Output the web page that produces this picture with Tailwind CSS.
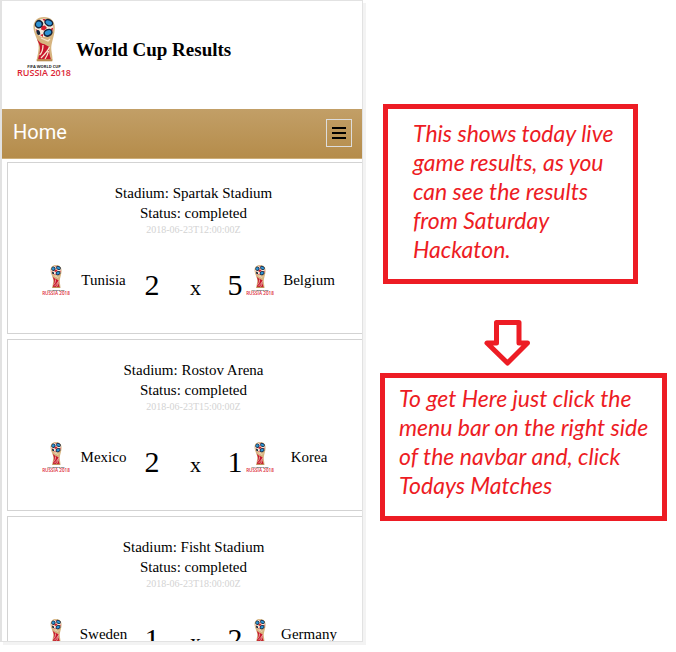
<!DOCTYPE html>
<html lang="en">
<head>
<meta charset="utf-8">
<meta name="viewport" content="width=device-width, initial-scale=1">
<title>World Cup Results</title>
<script src="https://cdn.jsdelivr.net/npm/@tailwindcss/browser@4"></script>
</head>
<body class="flex min-h-screen bg-white text-black font-['Liberation_Serif',serif]">

<svg class="hidden" aria-hidden="true">
  <symbol id="cup" viewBox="0 0 54 60">
    <path d="M27 0C20 0 16 4.500 16.500 11C17 17 20 21 21.500 27C22.300 33 20.500 38 19.500 43.500H35.500C35.800 38 33.500 33 34.500 28C35.500 22 37.800 17 37.800 10.500C37.800 4 33.500 0 27 0Z" fill="#d6b47f"/>
    <path d="M20 22C22 25 25 27 27 27L32.500 30C31.500 34 32.500 38 34 42.500H21C22 38 23.500 34 23 30C22.500 27 21 25 20 22Z" fill="#c8152d"/>
    <path d="M24 21L31 24L33 22M24 41C28 37 31 34 32.500 30M22.500 38C25 36 26 32 26 28M28 42C30 39 31 37 31.500 34" fill="none" stroke="#f8e6d0" stroke-width="1.300"/>
    <circle cx="27.200" cy="10.800" r="9.300" fill="#f6ead9"/>
    <path d="M24.500 9L28 8.500L30 11L27 13.500L24 12.500ZM25.500 2L28.500 2L27.300 4.500ZM18.500 12L20.500 13L20.500 16ZM33.500 12L36.300 10.500L35.300 14.500ZM23 18L26 17L26 20Z" fill="#d3202f"/>
    <g fill="#14233a">
      <ellipse cx="22" cy="7.200" rx="4" ry="4.200" transform="rotate(35 22 7.200)"/>
      <ellipse cx="31.800" cy="5.700" rx="4.700" ry="3.600" transform="rotate(25 31.800 5.700)"/>
      <ellipse cx="31" cy="15.800" rx="4.800" ry="3.900" transform="rotate(-25 31 15.800)"/>
      <ellipse cx="21.300" cy="15.500" rx="1.800" ry="2.600" transform="rotate(-20 21.300 15.500)"/>
    </g>
    <g fill="#2e93d4">
      <ellipse cx="21.800" cy="7.200" rx="2.700" ry="2.700"/>
      <ellipse cx="31.800" cy="5.700" rx="3.300" ry="2.200" transform="rotate(25 31.800 5.700)"/>
      <ellipse cx="31" cy="15.700" rx="3.300" ry="2.300" transform="rotate(-25 31 15.700)"/>
    </g>
    <path d="M19.800 42.300H35.300V44.300H19.800Z" fill="#b98d50"/>
    <text x="27" y="51" text-anchor="middle" font-family="Open Sans, sans-serif" font-size="4" font-weight="700" fill="#222">FIFA WORLD CUP</text>
    <text x="27" y="59" text-anchor="middle" font-family="Open Sans, sans-serif" font-size="9" font-weight="600" fill="#dc1f35">RUSSIA 2018</text>
  </symbol>
</svg>

<main class="mb-[10px] h-[calc(100vh-10px)] min-w-0 flex-1 overflow-hidden border border-l-2 border-[#e2e2e2] shadow-[3px_3px_0_#f3f3f3]">
  <header class="flex h-[108px] items-start pl-[15px] pt-4">
    <svg class="h-[60px] w-[54px]" role="img" aria-label="FIFA World Cup Russia 2018"><use href="#cup"/></svg>
    <h1 class="ml-[5px] mt-[21px] text-[19px] font-bold leading-6">World Cup Results</h1>
  </header>

  <nav class="flex h-[50px] items-center justify-between border-b border-[#cdae78] bg-linear-to-b from-[#c29f67] to-[#b58c4a] pl-[11px] pr-[10px] pb-[4px]">
    <a href="#" class="font-['Roboto',sans-serif] text-[20px] leading-6 text-white">Home</a>
    <button type="button" aria-label="Menu" class="mt-[3px] flex h-[28px] w-[26px] flex-col items-center justify-center gap-[3px] border border-[#ddd]">
      <span class="h-[2px] w-[14px] bg-black"></span>
      <span class="h-[2px] w-[14px] bg-black"></span>
      <span class="h-[2px] w-[14px] bg-black"></span>
    </button>
  </nav>

  <div class="-mr-[18px] ml-[5px] mt-[3px] flex flex-col gap-[5px]">
    <article class="h-[172px] border border-[#d3d3d3] pt-5 text-center">
      <p class="text-[15px] leading-5">Stadium: Spartak Stadium</p>
      <p class="text-[15px] leading-5">Status: completed</p>
      <p class="text-[10px] leading-[14px] text-[#d3d3d3]">2018-06-23T12:00:00Z</p>
      <div class="mt-[28px] grid grid-cols-[28px_67px_30px_57px_22px_28px_70px] items-start pl-[34px]">
        <svg class="h-[31px] w-[28px]" aria-hidden="true"><use href="#cup"/></svg>
        <span class="mt-[5px] text-[15px] leading-5">Tunisia</span>
        <span class="mt-[4px] text-[30px] leading-8">2</span>
        <span class="mt-[7px] text-[22px] leading-8">x</span>
        <span class="mt-[4px] text-[30px] leading-8">5</span>
        <svg class="h-[31px] w-[28px]" aria-hidden="true"><use href="#cup"/></svg>
        <span class="mt-[5px] text-[15px] leading-5">Belgium</span>
      </div>
    </article>
    <article class="h-[172px] border border-[#d3d3d3] pt-5 text-center">
      <p class="text-[15px] leading-5">Stadium: Rostov Arena</p>
      <p class="text-[15px] leading-5">Status: completed</p>
      <p class="text-[10px] leading-[14px] text-[#d3d3d3]">2018-06-23T15:00:00Z</p>
      <div class="mt-[28px] grid grid-cols-[28px_67px_30px_57px_22px_28px_70px] items-start pl-[34px]">
        <svg class="h-[31px] w-[28px]" aria-hidden="true"><use href="#cup"/></svg>
        <span class="mt-[5px] text-[15px] leading-5">Mexico</span>
        <span class="mt-[4px] text-[30px] leading-8">2</span>
        <span class="mt-[7px] text-[22px] leading-8">x</span>
        <span class="mt-[4px] text-[30px] leading-8">1</span>
        <svg class="h-[31px] w-[28px]" aria-hidden="true"><use href="#cup"/></svg>
        <span class="mt-[5px] text-[15px] leading-5">Korea</span>
      </div>
    </article>
    <article class="h-[172px] border border-[#d3d3d3] pt-5 text-center">
      <p class="text-[15px] leading-5">Stadium: Fisht Stadium</p>
      <p class="text-[15px] leading-5">Status: completed</p>
      <p class="text-[10px] leading-[14px] text-[#d3d3d3]">2018-06-23T18:00:00Z</p>
      <div class="mt-[28px] grid grid-cols-[28px_67px_30px_57px_22px_28px_70px] items-start pl-[34px]">
        <svg class="h-[31px] w-[28px]" aria-hidden="true"><use href="#cup"/></svg>
        <span class="mt-[5px] text-[15px] leading-5">Sweden</span>
        <span class="mt-[4px] text-[30px] leading-8">1</span>
        <span class="mt-[7px] text-[22px] leading-8">x</span>
        <span class="mt-[4px] text-[30px] leading-8">2</span>
        <svg class="h-[31px] w-[28px]" aria-hidden="true"><use href="#cup"/></svg>
        <span class="mt-[5px] text-[15px] leading-5">Germany</span>
      </div>
    </article>
  </div>
</main>

<aside class="ml-[17px] mr-[9px] flex w-[287px] shrink-0 flex-col pt-[104px] font-['Lato',sans-serif] text-[23px] italic leading-[29px] text-[#ed1c24]">
  <p class="ml-[3px] mr-[29px] h-[180px] whitespace-nowrap border-5 border-[#ed1c24] pl-[25px] pt-[10px]">This shows today live<br>game results, as you<br>can see the results<br>from Saturday<br>Hackaton.</p>
  <svg class="ml-[103px] mt-[35px] h-[48px] w-[48px]" viewBox="0 0 48 48" fill="none" stroke="#ed1c24" stroke-width="5" stroke-linejoin="round" aria-hidden="true"><path d="M13.500 3.500H36V24H44.500L24.500 44L4 24H13.500Z"/></svg>
  <p class="mt-[6px] h-[148px] whitespace-nowrap border-5 border-[#ed1c24] pl-[14px] pt-[6px]">To get Here just click the<br>menu bar on the right side<br>of the navbar and, click<br>Todays Matches</p>
</aside>
</body>
</html>
